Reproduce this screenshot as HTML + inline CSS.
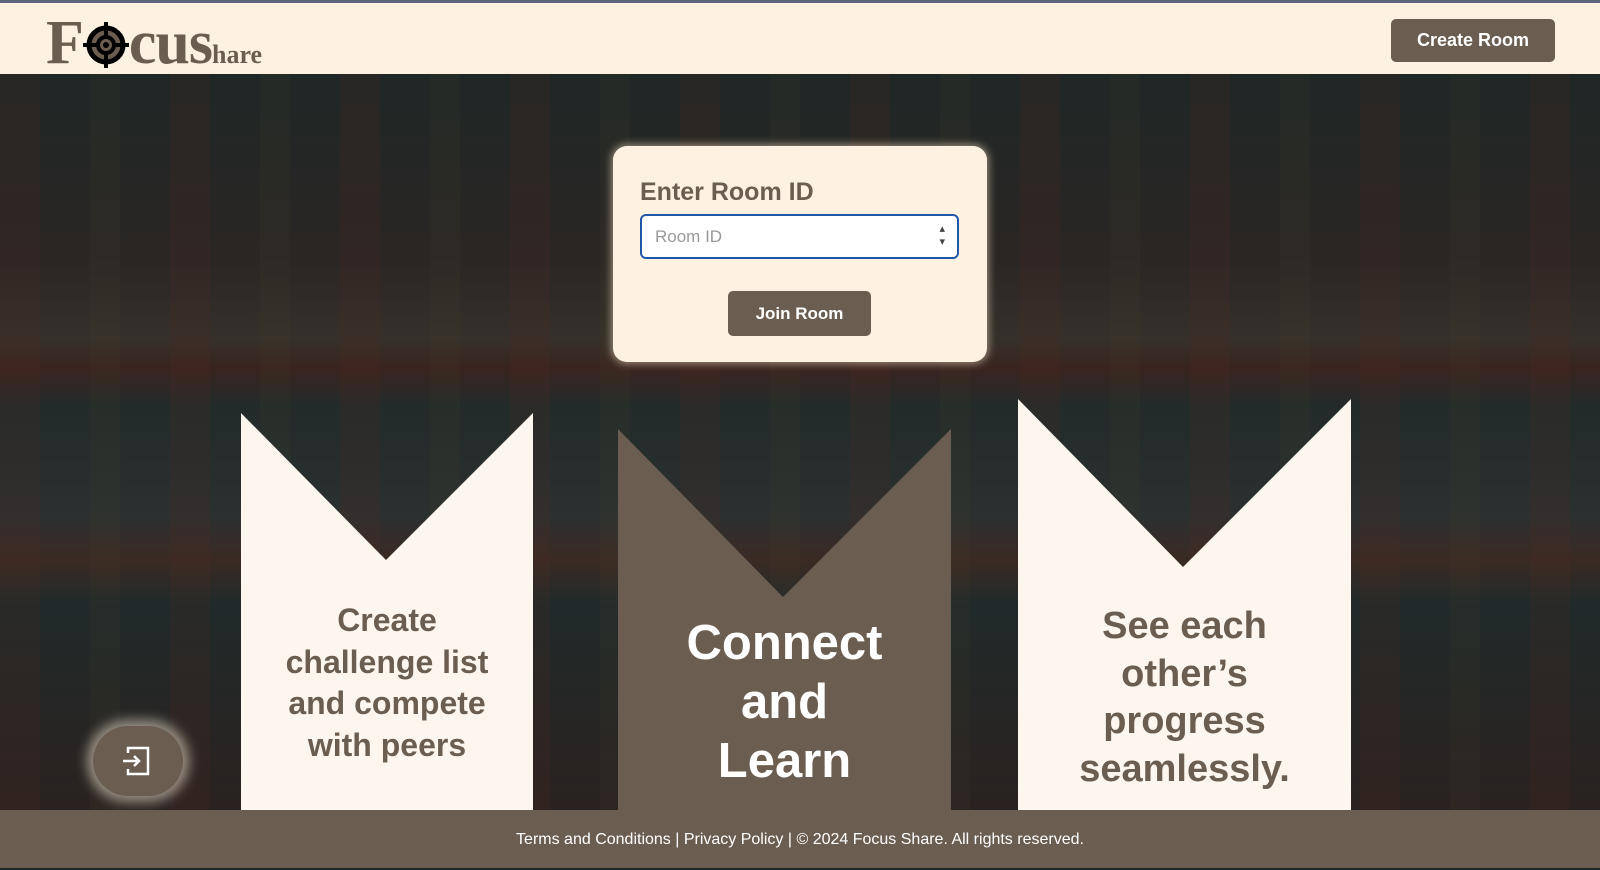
<!DOCTYPE html>
<html><head><meta charset="utf-8"><style>
*{margin:0;padding:0;box-sizing:border-box}
body{width:1600px;height:868px;overflow:hidden;font-family:"Liberation Sans",sans-serif;position:relative;background:#1e2828}
.hdr{position:absolute;left:0;top:0;width:1600px;height:74px;background:#fdf1e2;border-top:3px solid #5c6580}
.logo{position:absolute;left:46px;top:8px;font-family:"Liberation Serif",serif;font-weight:bold;color:#6b5d4f;font-size:62px;letter-spacing:-1px;line-height:64px}
.logo small{font-size:26px;letter-spacing:0}
.cr{position:absolute;left:1391px;top:16px;width:164px;height:43px;background:#6b5d4f;color:#fff;border-radius:5px;font-weight:bold;font-size:18px;text-align:center;line-height:43px}
.bg{position:absolute;left:0;top:74px;width:1600px;height:736px;background:
linear-gradient(180deg,#1f2726 0,#2a2624 25%,#35302a 36%,#3a2420 40%,#222b2a 45%,#2b3030 60%,#3b2a24 66%,#202a2a 72%,#2a2220 100%)}
.bg:before{content:"";position:absolute;left:0;top:0;width:100%;height:100%;background:repeating-linear-gradient(90deg,rgba(90,40,30,.15) 0 40px,rgba(0,0,0,0) 40px 90px,rgba(80,70,40,.1) 90px 120px,rgba(0,0,0,0) 120px 170px)}
.card{position:absolute;left:613px;top:146px;width:374px;height:216px;background:#fdf1e2;border-radius:14px;box-shadow:0 0 8px 2px rgba(220,200,170,.6)}
.card h2{position:absolute;left:27px;top:32px;font-size:25px;color:#6b5d4f;font-weight:bold}
.inp{position:absolute;left:27px;top:68px;width:319px;height:45px;background:#fff;border:2px solid #1f58a8;border-radius:6px;font-size:17px;color:#999;padding:11px 13px}
.inp:after{content:"▴\A▾";white-space:pre;position:absolute;right:12px;top:7px;font-size:11px;line-height:13px;color:#444}
.join{position:absolute;left:115px;top:145px;width:143px;height:45px;background:#6b5d4f;color:#fff;border-radius:5px;font-weight:bold;font-size:17px;text-align:center;line-height:45px}
.p{position:absolute;font-weight:bold;text-align:center}
.p svg{position:absolute;left:0;top:0}
.p div{position:absolute;left:0;width:100%}
.foot{position:absolute;left:0;top:810px;width:1600px;height:58px;background:#6b5d4f;color:#fff;font-size:16px;text-align:center;line-height:60px}
.fab{position:absolute;left:93px;top:726px;width:90px;height:70px;border-radius:35px;background:#6b5d4f;box-shadow:0 0 12px 6px rgba(230,220,200,.6)}
</style></head><body>
<div class="hdr"><div class="logo">F<span style="display:inline-block;width:46px;height:44px;position:relative;vertical-align:-4px"><svg width="48" height="50" viewBox="0 0 48 50" style="position:absolute;left:-1px;top:-3px"><circle cx="24" cy="25" r="17" fill="#6b5d4f" stroke="#000" stroke-width="5"/><circle cx="24" cy="25" r="8" fill="none" stroke="#000" stroke-width="4"/><circle cx="24" cy="25" r="3" fill="#000"/><path d="M24 2v14M24 34v14M1 25h14M33 25h14" stroke="#000" stroke-width="4"/></svg></span>cus<small>hare</small></div>
<div class="cr">Create Room</div></div>
<div class="bg"></div>
<div class="card"><h2>Enter Room ID</h2><div class="inp">Room ID</div><div class="join">Join Room</div></div>
<div class="p" style="left:241px;top:413px;width:292px;height:397px;color:#6b5d4f;font-size:32px;line-height:41.5px">
<svg width="292" height="397"><path d="M0 0L145 147L292 0V397H0Z" fill="#fdf6ee"/></svg>
<div style="top:187px">Create<br>challenge list<br>and compete<br>with peers</div></div>
<div class="p" style="left:618px;top:429px;width:333px;height:381px;color:#fff;font-size:49px;line-height:59px">
<svg width="333" height="381"><path d="M0 0L165 168L333 0V381H0Z" fill="#6b5d4f"/></svg>
<div style="top:185px">Connect<br>and<br>Learn</div></div>
<div class="p" style="left:1018px;top:399px;width:333px;height:411px;color:#6b5d4f;font-size:38px;line-height:47.5px">
<svg width="333" height="411"><path d="M0 0L165 168L333 0V411H0Z" fill="#fdf6ee"/></svg>
<div style="top:204px">See each<br>other’s<br>progress<br>seamlessly.</div></div>
<div class="fab"><svg width="90" height="70" viewBox="0 0 90 70"><path d="M35 27v-5h20v26H35v-5" fill="none" stroke="#fff" stroke-width="2.5"/><path d="M30 35h16M41 30l5 5-5 5" fill="none" stroke="#fff" stroke-width="2.5"/></svg></div>
<div class="foot">Terms and Conditions | Privacy Policy | © 2024 Focus Share. All rights reserved.</div>
</body></html>
